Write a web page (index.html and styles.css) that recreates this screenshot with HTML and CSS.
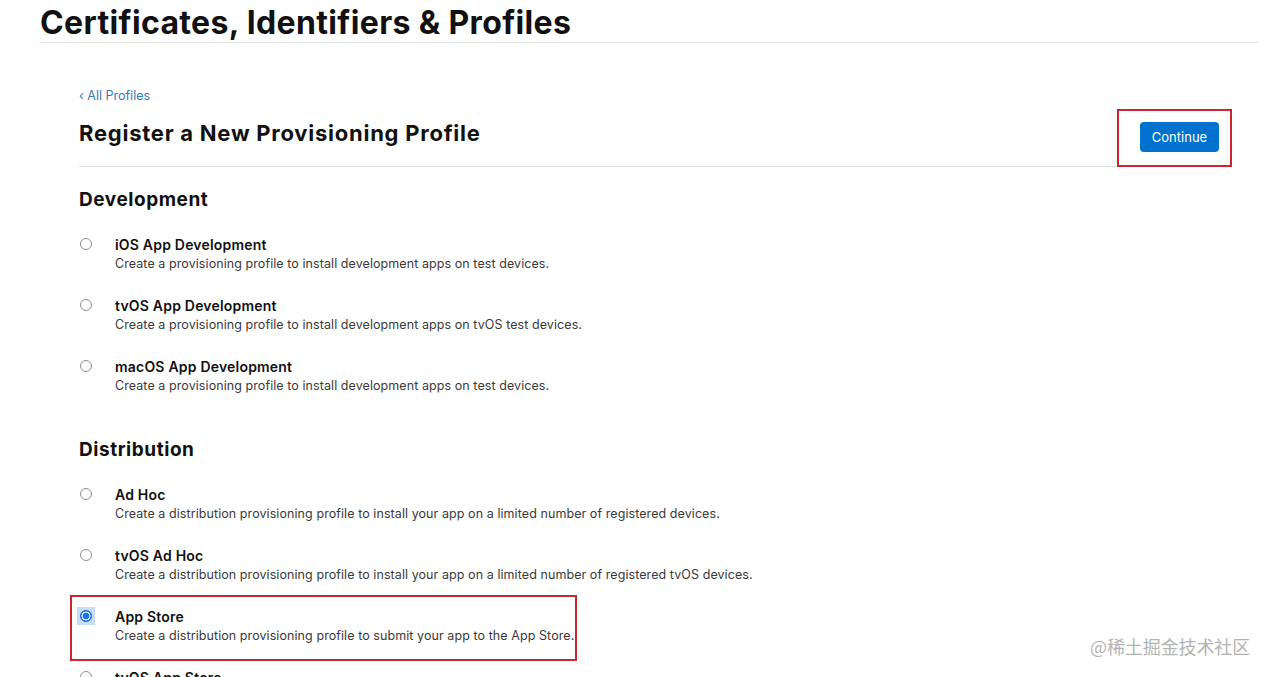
FILE: index.html
```html
<!DOCTYPE html>
<html lang="en">
<head>
<meta charset="utf-8">
<title>Certificates, Identifiers &amp; Profiles</title>
<link rel="stylesheet" href="styles.css">
</head>
<body>
<header class="top">
  <h1 class="top-title">Certificates, Identifiers &amp; Profiles</h1>
</header>
<main class="main">
  <a class="back" href="#">&#8249; All Profiles</a>
  <div class="title-row">
    <h2 class="page-title">Register a New Provisioning Profile</h2>
    <div class="mark mark-btn">
      <button class="btn" type="button">Continue</button>
    </div>
  </div>

  <section class="group">
    <h3 class="group-title">Development</h3>
    <div class="options">
      <label class="option">
        <span class="radio"></span>
        <span class="opt-text">
          <span class="opt-name">iOS App Development</span>
          <span class="opt-desc">Create a provisioning profile to install development apps on test devices.</span>
        </span>
      </label>
      <label class="option">
        <span class="radio"></span>
        <span class="opt-text">
          <span class="opt-name">tvOS App Development</span>
          <span class="opt-desc">Create a provisioning profile to install development apps on tvOS test devices.</span>
        </span>
      </label>
      <label class="option">
        <span class="radio"></span>
        <span class="opt-text">
          <span class="opt-name">macOS App Development</span>
          <span class="opt-desc">Create a provisioning profile to install development apps on test devices.</span>
        </span>
      </label>
    </div>
  </section>

  <section class="group group-dist">
    <h3 class="group-title">Distribution</h3>
    <div class="options">
      <label class="option">
        <span class="radio"></span>
        <span class="opt-text">
          <span class="opt-name">Ad Hoc</span>
          <span class="opt-desc">Create a distribution provisioning profile to install your app on a limited number of registered devices.</span>
        </span>
      </label>
      <label class="option">
        <span class="radio"></span>
        <span class="opt-text">
          <span class="opt-name">tvOS Ad Hoc</span>
          <span class="opt-desc">Create a distribution provisioning profile to install your app on a limited number of registered tvOS devices.</span>
        </span>
      </label>
      <div class="mark mark-opt">
        <label class="option">
          <span class="radio-focus"><span class="radio checked"></span></span>
          <span class="opt-text">
            <span class="opt-name">App Store</span>
            <span class="opt-desc">Create a distribution provisioning profile to submit your app to the App Store.</span>
          </span>
        </label>
      </div>
      <label class="option">
        <span class="radio"></span>
        <span class="opt-text">
          <span class="opt-name">tvOS App Store</span>
          <span class="opt-desc">Create a distribution provisioning profile to submit your tvOS app to the App Store.</span>
        </span>
      </label>
    </div>
  </section>
</main>
<div class="watermark">@稀土掘金技术社区</div>
</body>
</html>
```

FILE: styles.css
```css
* { box-sizing: border-box; }

html, body {
  margin: 0;
  padding: 0;
  background: #fff;
}

body {
  font-family: Inter, "Noto Sans", "Liberation Sans", sans-serif;
  color: #1d1d1f;
  overflow: hidden;
  height: 677px;
  position: relative;
}

.top {
  margin: 0 12px 0 40px;
  border-bottom: 1px solid #e3e3e3;
  height: 43px;
}

.top-title {
  margin: 0;
  font-size: 32px;
  line-height: 44px;
  font-weight: 700;
  letter-spacing: 0.35px;
  color: #111;
  position: relative;
  top: 1px;
}

.main {
  margin: 0 38px 0 79px;
  padding-top: 45px;
}

.back {
  display: block;
  font-size: 12.5px;
  line-height: 16px;
  color: #3579b8;
  text-decoration: none;
  margin-bottom: 5px;
}

.title-row {
  display: flex;
  justify-content: space-between;
  align-items: flex-start;
  border-bottom: 1px solid #dedede;
}

.page-title {
  margin: 10px 0 0;
  font-size: 22px;
  line-height: 28px;
  font-weight: 700;
  letter-spacing: 0.75px;
  color: #111;
}

.mark {
  border: 2px solid #c9262d;
}

.mark-btn {
  padding: 11px 11px 13px 21px;
  margin-bottom: -1px;
  position: relative;
  z-index: 1;
}

.btn {
  display: block;
  width: 79px;
  height: 30px;
  border: 0;
  border-radius: 4px;
  background: #0071cc;
  color: #fff;
  font-family: inherit;
  font-size: 13px;
  line-height: 30px;
  padding: 0;
}

.group {
  padding-top: 21px;
}

.group-dist {
  padding-top: 43px;
}

.group-title {
  margin: 0;
  font-size: 19px;
  line-height: 24px;
  font-weight: 700;
  letter-spacing: 0.55px;
  color: #111;
}

.options {
  display: flex;
  flex-direction: column;
  gap: 24px;
  padding-top: 24px;
}

.option {
  display: grid;
  grid-template-columns: 36px auto;
  align-items: start;
}

.radio {
  display: block;
  width: 12px;
  height: 12px;
  margin: 2px 0 0 1px;
  border: 1px solid #8e8e8e;
  border-radius: 50%;
  background: #fff;
}

.radio-focus {
  display: block;
  width: 18px;
  height: 18px;
  margin: -1px 0 0 -2px;
  padding: 3px;
  background: #c7def6;
}

.radio.checked {
  margin: 0;
  border: 1px solid #1a5fd0;
  background: radial-gradient(circle, #1a73e8 0 3.2px, #d7e8fb 3.6px 4.4px, #1a73e8 4.8px);
}

.opt-text {
  display: flex;
  flex-direction: column;
}

.opt-name {
  font-size: 14px;
  line-height: 18px;
  font-weight: 600;
  letter-spacing: 0.2px;
  color: #111;
}

.opt-desc {
  font-size: 12.5px;
  line-height: 19px;
  letter-spacing: 0.075px;
  color: #3a3a3a;
}

.mark-opt {
  align-self: flex-start;
  margin: -13px 0 -16px -9px;
  padding: 11px 1px 14px 7px;
}

.watermark {
  position: absolute;
  left: 1090px;
  top: 634px;
  font-family: "Noto Sans CJK SC", sans-serif;
  font-size: 18px;
  line-height: 24px;
  color: #b3b3b3;
  letter-spacing: -0.1px;
}
```
